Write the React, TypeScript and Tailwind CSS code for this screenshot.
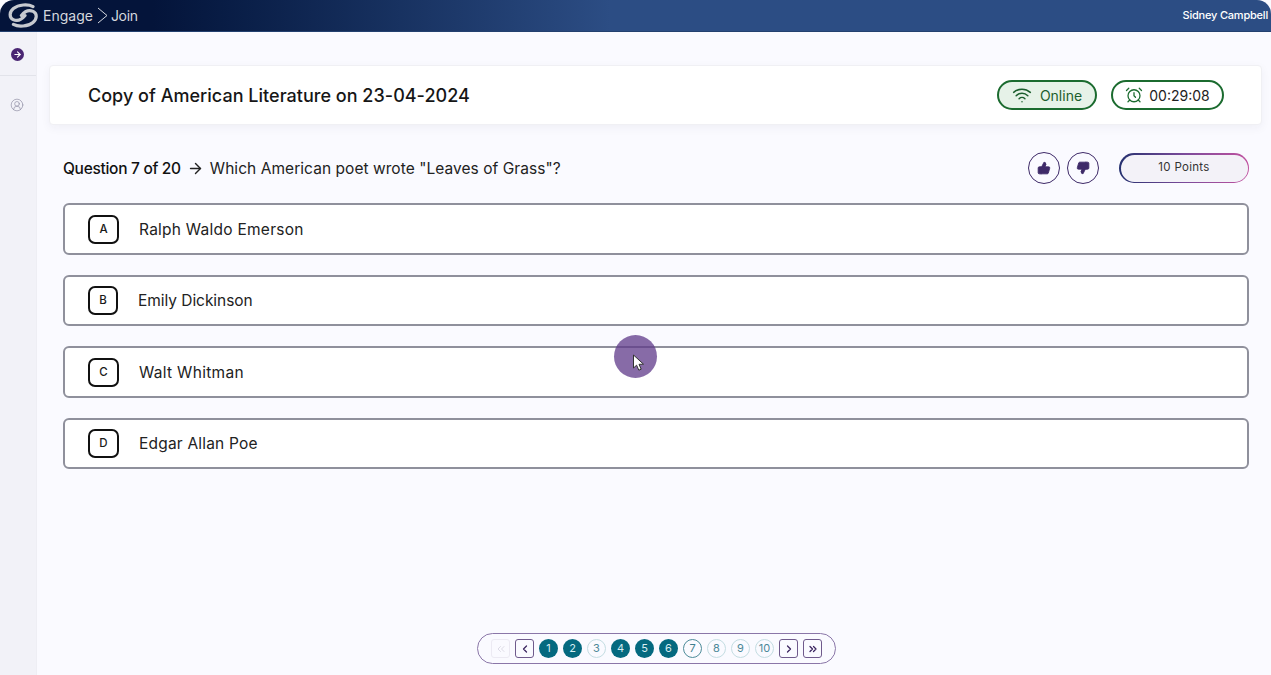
import { ChevronLeft, ChevronRight, ChevronsLeft, ChevronsRight, ArrowRight, CircleUserRound, Wifi, AlarmClock, ThumbsUp, ThumbsDown } from 'lucide-react'

const OPTIONS = [
  { key: 'A', text: 'Ralph Waldo Emerson', w: 'w-[31px]', gap: 'ml-[20px]', tracking: 'tracking-[0.25px]' },
  { key: 'B', text: 'Emily Dickinson', w: 'w-[30px]', gap: 'ml-[20px]', tracking: 'tracking-[-0.05px]' },
  { key: 'C', text: 'Walt Whitman', w: 'w-[31px]', gap: 'ml-[20px]', tracking: 'tracking-[0.3px]' },
  { key: 'D', text: 'Edgar Allan Poe', w: 'w-[31px]', gap: 'ml-[20px]', tracking: 'tracking-[0.2px]' },
]

const PAGES = [
  { n: 1, state: 'done' },
  { n: 2, state: 'done' },
  { n: 3, state: 'open' },
  { n: 4, state: 'done' },
  { n: 5, state: 'done' },
  { n: 6, state: 'done' },
  { n: 7, state: 'current' },
  { n: 8, state: 'open' },
  { n: 9, state: 'open' },
  { n: 10, state: 'open' },
]

const pageStyles: Record<string, string> = {
  done: 'bg-[#04697f] text-[#d6eef2]',
  open: 'border border-[#c4dde2] text-[#4d8898]',
  current: 'border border-[#4d8b99] text-[#3f7f8f]',
}

function Logo() {
  return (
    <svg width="30" height="25" viewBox="0 0 30 25" fill="none">
      <path d="M25 3.6C20 0.9 10.5 1.4 5.4 5.6C1 9.3 1.2 14.6 5.2 16.6C9 18.4 13.6 16.8 17 12.6" stroke="#c6c9cf" strokeWidth="3.2" strokeLinecap="round" />
      <path d="M5.4 21.4C10.4 24.1 19.9 23.6 25 19.4C29.4 15.7 29.2 10.4 25.2 8.4C21.4 6.6 16.8 8.2 13.4 12.4" stroke="#c6c9cf" strokeWidth="3.2" strokeLinecap="round" />
    </svg>
  )
}

function PagerBox({ children, faded }: { children: React.ReactNode; faded?: boolean }) {
  return (
    <div className={`w-[19px] h-[19px] rounded-[3px] border flex items-center justify-center ${faded ? 'border-[#eceaf3] text-[#dddbe6]' : 'border-[#6f5a8c] text-[#3b2560]'}`}>
      {children}
    </div>
  )
}

export default function App() {
  return (
    <div className="w-[1271px] h-[675px] overflow-hidden flex flex-col bg-[#fafaff] text-[#1a1a1a] font-['Inter','Noto_Sans',sans-serif] relative">
      {/* Top bar */}
      <header className="h-[32px] shrink-0 rounded-t-[14px] bg-gradient-to-r from-[#04143a] from-[12%] to-[#2c4d84] to-[48%] border-b border-[#23406f] flex items-center justify-between pl-[8px] pr-[3px]">
        <div className="flex items-center text-[#d5d8df] text-[14px]">
          <Logo />
          <span className="ml-[5px]">Engage</span>
          <svg width="11" height="17" viewBox="0 0 11 17" fill="none" className="ml-[4px] mr-[3px]">
            <path d="M1 1L10 8.5L1 16" stroke="#d5d8df" strokeWidth="1" />
          </svg>
          <span className="tracking-[-0.3px]">Join</span>
        </div>
        <span className="text-white text-[11px] font-medium tracking-[-0.2px]">Sidney Campbell</span>
      </header>

      <div className="flex flex-1 min-h-0">
        {/* Sidebar */}
        <aside className="w-[37px] shrink-0 bg-[#f2f2f8] border-r border-[#eeeef4] flex flex-col">
          <div className="h-[44px] border-b border-[#e2e3ea] flex items-center justify-center">
            <div className="w-[13px] h-[13px] rounded-full bg-[#4a2673] flex items-center justify-center text-white mt-[2px] -ml-[2px]">
              <ArrowRight size={9} strokeWidth={3} />
            </div>
          </div>
          <div className="flex justify-center mt-[22px] -ml-[2px]">
            <CircleUserRound size={14} strokeWidth={1.2} className="text-[#9291a6]" />
          </div>
        </aside>

        {/* Main */}
        <main className="flex-1 min-w-0 flex flex-col pl-[12px] pr-[9px] pt-[33px] pb-[11px]">
          <section className="h-[60px] shrink-0 bg-white rounded-[4px] border border-[#f0f0f4] shadow-[0_3px_10px_rgba(40,40,80,0.05)] flex items-center justify-between pl-[38px] pr-[37px]">
            <h1 className="text-[18px] font-medium text-[#161616] tracking-[0.02px]">Copy of American Literature on 23-04-2024</h1>
            <div className="flex items-center gap-[14px]">
              <div className="w-[100px] h-[30px] rounded-full border-2 border-[#1b6b2f] bg-[#e6f2e8] flex items-center justify-center gap-[8px] text-[#1b5e2d] text-[14px]">
                <Wifi size={20} strokeWidth={1.8} />
                <span>Online</span>
              </div>
              <div className="w-[113px] h-[30px] rounded-full border-2 border-[#1b6b2f] bg-white flex items-center justify-center gap-[6px] text-[14px] text-[#222]">
                <AlarmClock size={18} strokeWidth={1.7} className="text-[#1b6b2f]" />
                <span>00:29:08</span>
              </div>
            </div>
          </section>

          {/* Question row */}
          <div className="flex items-center justify-between mt-[27px] pl-[14px] pr-[13px] h-[32px] shrink-0">
            <div className="flex items-center text-[15.5px] text-[#222] pt-[1px]">
              <span className="font-medium text-[#111] tracking-[-0.3px]">Question 7 of 20</span>
              <ArrowRight size={17} strokeWidth={2} className="ml-[6px] mr-[6px] text-[#222]" />
              <span className="tracking-[0.05px]">Which American poet wrote "Leaves of Grass"?</span>
            </div>
            <div className="flex items-center">
              <div className="w-[32px] h-[32px] rounded-full border-[1.5px] border-[#3e2a68] flex items-center justify-center text-[#3e2a68]">
                <ThumbsUp size={14} fill="currentColor" strokeWidth={1.5} />
              </div>
              <div className="ml-[7px] w-[32px] h-[32px] rounded-full border-[1.5px] border-[#3e2a68] flex items-center justify-center text-[#3e2a68]">
                <ThumbsDown size={14} fill="currentColor" strokeWidth={1.5} />
              </div>
              <div className="ml-[20px] w-[130px] h-[30px] rounded-full p-[1.5px] bg-gradient-to-r from-[#24306f] via-[#7a4a9a] to-[#c0509f]">
                <div className="w-full h-full rounded-full bg-[#f3f2f8] flex items-center justify-center text-[11.5px] tracking-[0.3px] text-[#333]">10 Points</div>
              </div>
            </div>
          </div>

          {/* Options */}
          <div className="flex flex-col gap-[20px] mt-[19px] ml-[14px] mr-[13px]">
            {OPTIONS.map(o => (
              <div key={o.key} className="h-[51.5px] bg-white rounded-[6px] border-2 border-[#8f909c] flex items-center pl-[23px] pt-[1px]">
                <div className={`${o.w} h-[29px] rounded-[7px] border-2 border-[#111] flex items-center justify-center text-[11.5px] font-medium`}>{o.key}</div>
                <span className={`${o.gap} text-[15.5px] text-[#222] ${o.tracking}`}>{o.text}</span>
              </div>
            ))}
          </div>

          {/* Pager */}
          <div className="mt-auto self-center ml-[2px] w-[359px] h-[31px] rounded-full border border-[#8a76a8] flex items-center justify-center gap-[5px] text-[11px]">
            <PagerBox faded><ChevronsLeft size={12} strokeWidth={2} /></PagerBox>
            <PagerBox><ChevronLeft size={12} strokeWidth={2.5} /></PagerBox>
            {PAGES.map(p => (
              <div key={p.n} className={`w-[19px] h-[19px] rounded-full flex items-center justify-center ${pageStyles[p.state]}`}>{p.n}</div>
            ))}
            <PagerBox><ChevronRight size={12} strokeWidth={2.5} /></PagerBox>
            <PagerBox><ChevronsRight size={12} strokeWidth={2.5} /></PagerBox>
          </div>
        </main>
      </div>

      {/* Cursor highlight */}
      <div className="absolute left-[614px] top-[335px] w-[43px] h-[43px] rounded-full bg-[#5f3a8a]/75 flex items-center justify-center">
        <svg width="14" height="18" viewBox="0 0 14 18" className="ml-[7px] mt-[13px]">
          <path d="M1.5 1L1.5 14L4.6 11.2L6.8 16.2L9.2 15.2L7 10.3L11.5 10.2Z" fill="#fff" stroke="#333" strokeWidth="1" />
        </svg>
      </div>
    </div>
  )
}
